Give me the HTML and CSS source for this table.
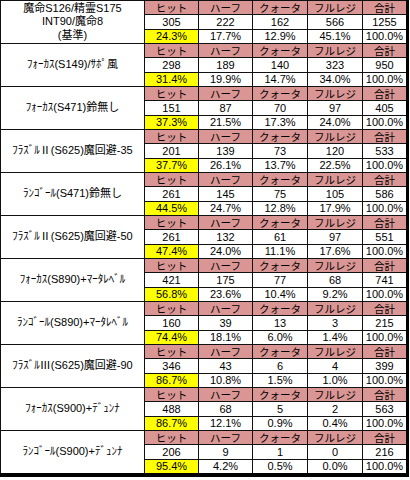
FILE: index.html
```html
<!DOCTYPE html>
<html lang="ja">
<head>
<meta charset="utf-8">
<link rel="stylesheet" href="styles.css">
</head>
<body>
<table class="sheet">
<colgroup>
<col class="c-label"><col class="c-hit"><col class="c-half"><col class="c-quarter"><col class="c-full"><col class="c-total">
</colgroup>
<tbody>
<tr><td class="label" rowspan="3">魔命S126/精霊S175<br>INT90/魔命8<br>(基準)</td><td class="hd">ヒット</td><td class="hd">ハーフ</td><td class="hd">クォータ</td><td class="hd">フルレジ</td><td class="hd">合計</td></tr>
<tr><td>305</td><td>222</td><td>162</td><td>566</td><td>1255</td></tr>
<tr><td class="hl">24.3%</td><td>17.7%</td><td>12.9%</td><td>45.1%</td><td>100.0%</td></tr>

<tr><td class="label" rowspan="3">ﾌｫｰｶｽ(S149)/ｻﾎﾟ風</td><td class="hd">ヒット</td><td class="hd">ハーフ</td><td class="hd">クォータ</td><td class="hd">フルレジ</td><td class="hd">合計</td></tr>
<tr><td>298</td><td>189</td><td>140</td><td>323</td><td>950</td></tr>
<tr><td class="hl">31.4%</td><td>19.9%</td><td>14.7%</td><td>34.0%</td><td>100.0%</td></tr>

<tr><td class="label" rowspan="3">ﾌｫｰｶｽ(S471)鈴無し</td><td class="hd">ヒット</td><td class="hd">ハーフ</td><td class="hd">クォータ</td><td class="hd">フルレジ</td><td class="hd">合計</td></tr>
<tr><td>151</td><td>87</td><td>70</td><td>97</td><td>405</td></tr>
<tr><td class="hl">37.3%</td><td>21.5%</td><td>17.3%</td><td>24.0%</td><td>100.0%</td></tr>

<tr><td class="label" rowspan="3">ﾌﾗｽﾞﾙⅡ(S625)魔回避-35</td><td class="hd">ヒット</td><td class="hd">ハーフ</td><td class="hd">クォータ</td><td class="hd">フルレジ</td><td class="hd">合計</td></tr>
<tr><td>201</td><td>139</td><td>73</td><td>120</td><td>533</td></tr>
<tr><td class="hl">37.7%</td><td>26.1%</td><td>13.7%</td><td>22.5%</td><td>100.0%</td></tr>

<tr><td class="label" rowspan="3">ﾗﾝｺﾞｰﾙ(S471)鈴無し</td><td class="hd">ヒット</td><td class="hd">ハーフ</td><td class="hd">クォータ</td><td class="hd">フルレジ</td><td class="hd">合計</td></tr>
<tr><td>261</td><td>145</td><td>75</td><td>105</td><td>586</td></tr>
<tr><td class="hl">44.5%</td><td>24.7%</td><td>12.8%</td><td>17.9%</td><td>100.0%</td></tr>

<tr><td class="label" rowspan="3">ﾌﾗｽﾞﾙⅡ(S625)魔回避-50</td><td class="hd">ヒット</td><td class="hd">ハーフ</td><td class="hd">クォータ</td><td class="hd">フルレジ</td><td class="hd">合計</td></tr>
<tr><td>261</td><td>132</td><td>61</td><td>97</td><td>551</td></tr>
<tr><td class="hl">47.4%</td><td>24.0%</td><td>11.1%</td><td>17.6%</td><td>100.0%</td></tr>

<tr><td class="label" rowspan="3">ﾌｫｰｶｽ(S890)+ﾏｰﾀﾚﾍﾞﾙ</td><td class="hd">ヒット</td><td class="hd">ハーフ</td><td class="hd">クォータ</td><td class="hd">フルレジ</td><td class="hd">合計</td></tr>
<tr><td>421</td><td>175</td><td>77</td><td>68</td><td>741</td></tr>
<tr><td class="hl">56.8%</td><td>23.6%</td><td>10.4%</td><td>9.2%</td><td>100.0%</td></tr>

<tr><td class="label" rowspan="3">ﾗﾝｺﾞｰﾙ(S890)+ﾏｰﾀﾚﾍﾞﾙ</td><td class="hd">ヒット</td><td class="hd">ハーフ</td><td class="hd">クォータ</td><td class="hd">フルレジ</td><td class="hd">合計</td></tr>
<tr><td>160</td><td>39</td><td>13</td><td>3</td><td>215</td></tr>
<tr><td class="hl">74.4%</td><td>18.1%</td><td>6.0%</td><td>1.4%</td><td>100.0%</td></tr>

<tr><td class="label" rowspan="3">ﾌﾗｽﾞﾙⅢ(S625)魔回避-90</td><td class="hd">ヒット</td><td class="hd">ハーフ</td><td class="hd">クォータ</td><td class="hd">フルレジ</td><td class="hd">合計</td></tr>
<tr><td>346</td><td>43</td><td>6</td><td>4</td><td>399</td></tr>
<tr><td class="hl">86.7%</td><td>10.8%</td><td>1.5%</td><td>1.0%</td><td>100.0%</td></tr>

<tr><td class="label" rowspan="3">ﾌｫｰｶｽ(S900)+ﾃﾞｭﾝﾅ</td><td class="hd">ヒット</td><td class="hd">ハーフ</td><td class="hd">クォータ</td><td class="hd">フルレジ</td><td class="hd">合計</td></tr>
<tr><td>488</td><td>68</td><td>5</td><td>2</td><td>563</td></tr>
<tr><td class="hl">86.7%</td><td>12.1%</td><td>0.9%</td><td>0.4%</td><td>100.0%</td></tr>

<tr><td class="label" rowspan="3">ﾗﾝｺﾞｰﾙ(S900)+ﾃﾞｭﾝﾅ</td><td class="hd">ヒット</td><td class="hd">ハーフ</td><td class="hd">クォータ</td><td class="hd">フルレジ</td><td class="hd">合計</td></tr>
<tr><td>206</td><td>9</td><td>1</td><td>0</td><td>216</td></tr>
<tr><td class="hl">95.4%</td><td>4.2%</td><td>0.5%</td><td>0.0%</td><td>100.0%</td></tr>
</tbody>
</table>
</body>
</html>
```
FILE: styles.css
```css
html, body {
  margin: 0;
  padding: 0;
  background: #ffffff;
}
body {
  width: 410px;
  height: 480px;
  overflow: hidden;
}
.sheet {
  border-collapse: collapse;
  table-layout: fixed;
  width: 408px;
  height: 477px;
  font-family: "Liberation Sans", "Noto Sans CJK JP", sans-serif;
  font-size: 11px;
  color: #000;
  border-right: 3px solid #000;
  border-bottom: 4px solid #000;
}
.c-label { width: 144px; }
.c-hit { width: 54px; }
.c-half { width: 54px; }
.c-quarter { width: 55px; }
.c-full { width: 55px; }
.c-total { width: 45px; }
.sheet td {
  border: 1px solid #111;
  padding: 0;
  height: 13px;
  line-height: 12px;
  text-align: center;
  vertical-align: middle;
  white-space: nowrap;
  overflow: hidden;
}
.sheet td.label {
  font-family: "Liberation Sans", "Noto Sans CJK JP", sans-serif;
  font-size: 11px;
  line-height: 13.5px;
}
.sheet td.hd {
  background: #da9694;
  font-family: "Noto Sans CJK JP", sans-serif;
  font-size: 10.5px;
}
.sheet td.hl {
  background: #ffff00;
}
```
